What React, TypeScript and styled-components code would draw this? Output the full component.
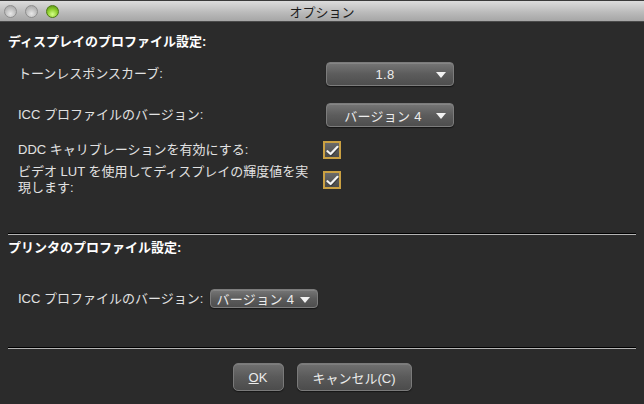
import React from 'react';
import styled, { createGlobalStyle, css } from 'styled-components';

const GlobalStyle = createGlobalStyle`
  html, body {
    margin: 0;
    padding: 0;
    background: #2b2b2b;
  }
  body {
    font-family: 'Liberation Sans', 'Noto Sans CJK JP', sans-serif;
    font-size: 13px;
    color: #e4e4e4;
  }
`;

const Window = styled.div`
  width: 644px;
  height: 404px;
  background: #2b2b2b;
  overflow: hidden;
  display: flex;
  flex-direction: column;
`;

const TitleBar = styled.div`
  height: 22px;
  box-sizing: border-box;
  border-top: 1px solid #3a3a3a;
  border-bottom: 1px solid #4a4a4a;
  background: linear-gradient(#dcdcdc, #b9b9b9 60%, #a6a6a6);
  display: flex;
  align-items: center;
  position: relative;
`;

const Lights = styled.div`
  display: flex;
  gap: 8px;
  padding-left: 4px;
`;

const Light = styled.span<{ $active?: boolean }>`
  width: 13px;
  height: 13px;
  border-radius: 50%;
  box-sizing: border-box;
  border: 1px solid #8e8e8e;
  background: radial-gradient(circle at 50% 70%, #e8e8e8, #bdbdbd 55%, #a0a0a0);
  ${({ $active }) =>
    $active &&
    css`
      border-color: #4d7a14;
      background: radial-gradient(circle at 50% 75%, #d6ff8a, #8fcf2e 50%, #4f8a0f);
    `}
`;

const Title = styled.div`
  position: absolute;
  left: 0;
  right: 0;
  text-align: center;
  color: #1c1c1c;
  font-size: 13px;
  pointer-events: none;
`;

const Content = styled.div`
  padding: 0 8px;
  display: flex;
  flex-direction: column;
`;

const SectionTitle = styled.div<{ $top: number }>`
  margin-top: ${({ $top }) => $top}px;
  line-height: 16px;
  font-weight: bold;
  color: #ffffff;
`;

const FormRow = styled.div<{ $top: number; $height: number }>`
  margin-top: ${({ $top }) => $top}px;
  height: ${({ $height }) => $height}px;
  padding-left: 10px;
  display: grid;
  grid-template-columns: 305px auto;
  align-items: center;
`;

const InlineRow = styled.div<{ $top: number }>`
  margin-top: ${({ $top }) => $top}px;
  height: 19px;
  padding-left: 10px;
  display: flex;
  align-items: center;
  gap: 7px;
`;

const Label = styled.div`
  line-height: 16px;
  color: #e2e2e2;
`;

const Select = styled.div<{ $width: number; $height: number; $offset?: number; $pad?: number }>`
  width: ${({ $width }) => $width}px;
  height: ${({ $height }) => $height}px;
  margin-left: ${({ $offset }) => $offset || 0}px;
  padding-right: ${({ $pad }) => $pad || 10}px;
  box-sizing: border-box;
  border: 1px solid #7c7c7c;
  border-radius: 4px;
  background: linear-gradient(#767676, #5c5c5c 50%, #4e4e4e);
  box-shadow: inset 0 1px 0 rgba(255, 255, 255, 0.12), 0 1px 1px rgba(0, 0, 0, 0.5);
  color: #ececec;
  display: flex;
  align-items: center;
  position: relative;
`;

const SelectText = styled.span`
  flex: 1;
  text-align: center;
  letter-spacing: 0.3px;
`;

const Arrow = styled.span`
  position: absolute;
  right: 7px;
  top: 50%;
  margin-top: -2px;
  width: 0;
  height: 0;
  border-left: 5px solid transparent;
  border-right: 5px solid transparent;
  border-top: 6px solid #f2f2f2;
`;

const CheckBox = styled.span`
  width: 18px;
  height: 18px;
  box-sizing: border-box;
  border: 2px solid #caa042;
  background: linear-gradient(#6a6a6a, #4a4a4a);
  display: flex;
  align-items: center;
  justify-content: center;
`;

const Separator = styled.div<{ $top: number }>`
  margin-top: ${({ $top }) => $top}px;
  height: 0;
  border-top: 1px solid #000;
  border-bottom: 1px solid #b4b4b4;
`;

const ButtonRow = styled.div`
  margin-top: 14px;
  display: flex;
  justify-content: center;
  gap: 13px;
`;

const Button = styled.button<{ $width: number }>`
  width: ${({ $width }) => $width}px;
  height: 28px;
  border: 1px solid #7a7a7a;
  border-radius: 5px;
  background: linear-gradient(#707070, #5a5a5a 50%, #4c4c4c);
  box-shadow: inset 0 1px 0 rgba(255, 255, 255, 0.1), 0 1px 1px rgba(0, 0, 0, 0.5);
  color: #ececec;
  font-family: inherit;
  font-size: 13px;
  padding: 0;
`;

const Check = () => (
  <svg width="13" height="11" viewBox="0 0 13 11">
    <path d="M1.5 6.2 L4.6 9 L11.5 1.8" fill="none" stroke="#1e1e1e" strokeOpacity="0.5" strokeWidth="2.6" strokeLinecap="round" strokeLinejoin="round" transform="translate(0.6 0.8)" />
    <path d="M1.5 6.2 L4.6 9 L11.5 1.8" fill="none" stroke="#f4f4f4" strokeWidth="2.2" strokeLinecap="round" strokeLinejoin="round" />
  </svg>
);

export default function App() {
  return (
    <Window>
      <GlobalStyle />
      <TitleBar>
        <Lights>
          <Light />
          <Light />
          <Light $active />
        </Lights>
        <Title>オプション</Title>
      </TitleBar>
      <Content>
        <SectionTitle $top={12}>ディスプレイのプロファイル設定:</SectionTitle>
        <FormRow $top={12} $height={24}>
          <Label>トーンレスポンスカーブ:</Label>
          <Select $width={128} $height={24} $offset={3}>
            <SelectText>1.8</SelectText>
            <Arrow />
          </Select>
        </FormRow>
        <FormRow $top={17} $height={24}>
          <Label>ICC プロファイルのバージョン:</Label>
          <Select $width={128} $height={24} $offset={3} $pad={14}>
            <SelectText>バージョン 4</SelectText>
            <Arrow />
          </Select>
        </FormRow>
        <FormRow $top={14} $height={18}>
          <Label>DDC キャリブレーションを有効にする:</Label>
          <CheckBox>
            <Check />
          </CheckBox>
        </FormRow>
        <FormRow $top={5} $height={32}>
          <Label>
            ビデオ LUT を使用してディスプレイの輝度値を実
            <br />
            現します:
          </Label>
          <CheckBox>
            <Check />
          </CheckBox>
        </FormRow>
        <Separator $top={37} />
        <SectionTitle $top={5}>プリンタのプロファイル設定:</SectionTitle>
        <InlineRow $top={33}>
          <Label>ICC プロファイルのバージョン:</Label>
          <Select $width={108} $height={19} $pad={18}>
            <SelectText>バージョン 4</SelectText>
            <Arrow />
          </Select>
        </InlineRow>
        <Separator $top={39} />
        <ButtonRow>
          <Button $width={51}>
            <u>O</u>K
          </Button>
          <Button $width={115}>キャンセル(C)</Button>
        </ButtonRow>
      </Content>
    </Window>
  );
}
